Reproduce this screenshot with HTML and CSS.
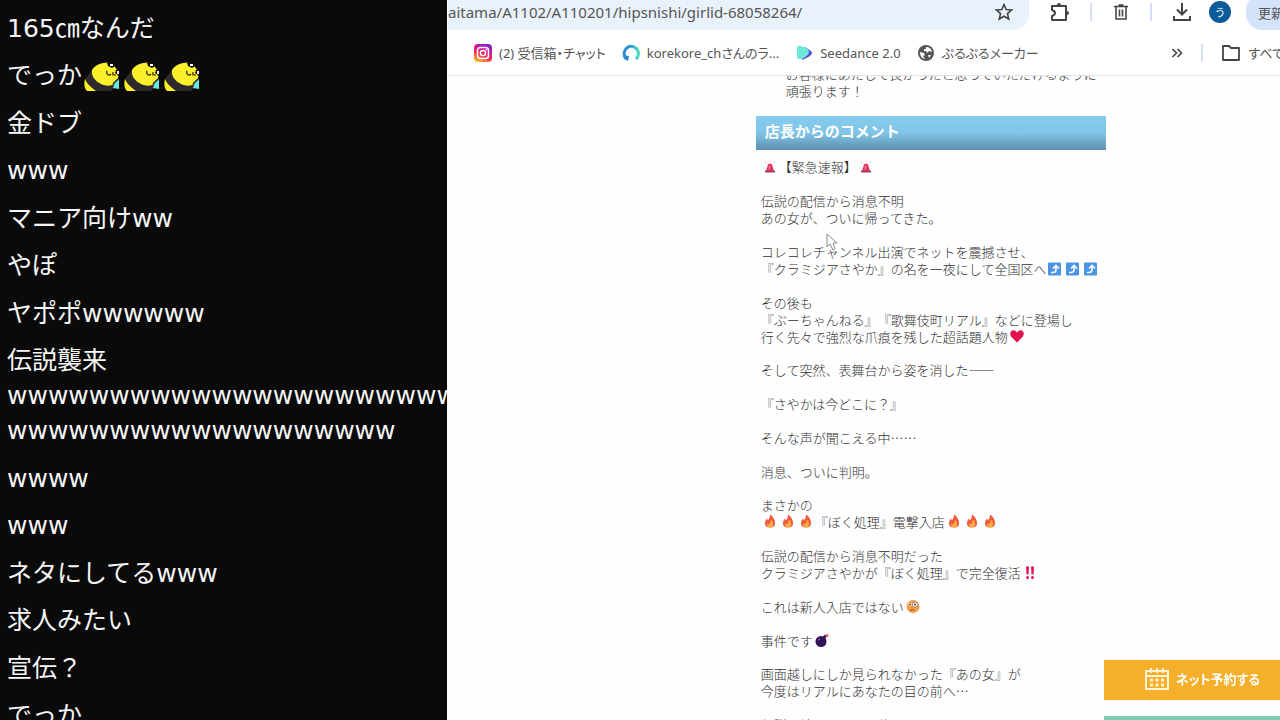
FILE: index.html
```
<!DOCTYPE html>
<html lang="ja">

<head>
    <meta charset="UTF-8">
    <meta name="viewport" content="width=device-width, initial-scale=1.0">
    <title>店長からのコメント</title>
    <link rel="stylesheet" href="styles.css">
</head>

<body>

    <!-- shared icons -->
    <svg class="sprite" aria-hidden="true">
        <symbol id="bee" viewBox="0 0 36 30">
            <path d="M10 29C2 29 0 24 1 17L8 8C12 2 18 0 25 1C32 3 35 8 35 16C34 24 30 28 26 29Z" fill="#2e2a2b"/>
            <path d="M8 8C11 3 18 0 25 1C33 4 36 12 33 19C30 24 23 25 17 22C11 19 7 14 8 8Z" fill="#fcf02c"/>
            <path d="M1 17C3 22 7 25 12 29H3C0 26 0 21 1 17Z" fill="#fcf02c"/>
            <path d="M23 1H29L31 4L28 6L24 4Z" fill="#111"/>
            <path d="M32 8H35V14L31 11Z" fill="#111"/>
            <path d="M26 2H29V4H26ZM33 9H35V12H33Z" fill="#fff"/>
            <path d="M23 9C22 13 25 14 27 12M29 10V13H32" fill="none" stroke="#222" stroke-width="1.2"/>
            <path d="M31 20L35 17V27L29 26Z" fill="#6fe6e6"/>
            <path d="M29 22L34 17" stroke="#222" stroke-width="1.5"/>
        </symbol>
        <symbol id="siren" viewBox="0 0 16 16">
            <path d="M4 13L6 6Q8 4 10 6L12 13Z" fill="#e0305c"/>
            <path d="M6 11L7 7H9L8 11Z" fill="#f06a8c"/>
            <path d="M3 12H13V14H3Z" fill="#b03a58"/>
            <path d="M5 5L3 3M8 3V2M11 5L13 3" stroke="#f3b08a" stroke-width="1"/>
        </symbol>
        <symbol id="arrow" viewBox="0 0 16 16">
            <rect x="1" y="2" width="13" height="13" rx="1" fill="#4c94e4"/>
            <path d="M4 12H6Q9 12 9 9V6M6 8L9 5L12 8" fill="none" stroke="#fff" stroke-width="1.6"/>
        </symbol>
        <symbol id="heart" viewBox="0 0 16 16">
            <path d="M8 14L2 8Q0 4 3 2Q6 1 8 4Q10 1 13 2Q16 4 14 8Z" fill="#e3124f"/>
        </symbol>
        <symbol id="fire" viewBox="0 0 16 16">
            <path d="M8 1Q13 4 13 10Q13 14 8 14Q3 14 3 10Q3 7 5 5L6 7Q8 5 8 1Z" fill="#f0593c"/>
            <path d="M9 6Q12 9 11 12Q10 14 8 14Q4 13 5 10L7 11Q9 9 9 6Z" fill="#fbae3c"/>
        </symbol>
        <symbol id="bangs" viewBox="0 0 16 16">
            <path d="M4 2H7L6.500 10H4.500ZM9 2H12L11.500 10H9.500Z" fill="#e3124f"/>
            <circle cx="5.500" cy="13" r="1.500" fill="#e3124f"/>
            <circle cx="10.500" cy="13" r="1.500" fill="#e3124f"/>
        </symbol>
        <symbol id="monocle" viewBox="0 0 16 16">
            <circle cx="8" cy="8" r="6.500" fill="#f59b43"/>
            <circle cx="5" cy="6" r="1.800" fill="#fff"/>
            <circle cx="10" cy="6" r="2.600" fill="#fff" stroke="#8d7a7a" stroke-width="0.800"/>
            <circle cx="5" cy="6" r="0.900" fill="#402a32"/>
            <circle cx="10" cy="6" r="0.900" fill="#402a32"/>
            <path d="M5 12Q8 10 9 12" fill="none" stroke="#7a4a32"/>
        </symbol>
        <symbol id="bomb" viewBox="0 0 16 16">
            <circle cx="7" cy="9" r="5.500" fill="#32145a"/>
            <path d="M10 5L12 3" stroke="#32145a" stroke-width="3"/>
            <circle cx="13" cy="3" r="1.500" fill="#ee5a5a"/>
            <circle cx="5" cy="7" r="1" fill="#7d5ab0"/>
        </symbol>
    </svg>

    <aside class="chat">
        <ul>
            <li>165㎝なんだ</li>
            <li>でっか<svg class="bee"><use href="#bee"/></svg><svg class="bee"><use href="#bee"/></svg><svg class="bee"><use href="#bee"/></svg></li>
            <li>金ドブ</li>
            <li>www</li>
            <li>マニア向けww</li>
            <li>やぽ</li>
            <li>ヤポポwwwwww</li>
            <li>伝説襲来<br>wwwwwwwwwwwwwwwwwwwwww<br>wwwwwwwwwwwwwwwwwww</li>
            <li>wwww</li>
            <li>www</li>
            <li>ネタにしてるwww</li>
            <li>求人みたい</li>
            <li>宣伝？</li>
            <li>でっか</li>
        </ul>
    </aside>

    <div class="browser">
        <header>
            <div class="toolbar">
                <div class="address">
                    <a class="url" href="#">aitama/A1102/A110201/hipsnishi/girlid-68058264/</a>
                    <button aria-label="ブックマーク">
                        <svg width="18" height="18" viewBox="0 0 18 18"><path d="M9 1.500L11.200 6.500L16.500 7L12.500 10.600L13.700 16L9 13.200L4.300 16L5.500 10.600L1.500 7L6.800 6.500Z" fill="none" stroke="#444" stroke-width="1.600"/></svg>
                    </button>
                </div>
                <div class="tools">
                    <button aria-label="拡張機能">
                        <svg width="20" height="20" viewBox="0 0 20 20">
                            <path d="M2 4H16V18H2V14Q5 13 5 11Q5 9 2 8Z" fill="none" stroke="#444" stroke-width="2" stroke-linejoin="round"/>
                            <path d="M7 3Q7 1 9 1Q11 1 11 3ZM17 9Q19 9 19 11Q19 13 17 13Z" fill="#444"/>
                        </svg>
                    </button>
                    <span class="divider"></span>
                    <button aria-label="削除">
                        <svg width="18" height="18" viewBox="0 0 18 18"><path d="M4 4V16H14V4M2 3.500H16M6.500 2H11.500M7.500 6.500V13.500M10.500 6.500V13.500" fill="none" stroke="#444" stroke-width="1.600"/></svg>
                    </button>
                    <span class="divider"></span>
                    <button aria-label="ダウンロード">
                        <svg width="20" height="20" viewBox="0 0 20 20"><path d="M10 1V12M5 7.500L10 12.500L15 7.500M2 14V18H18V14" fill="none" stroke="#444" stroke-width="2"/></svg>
                    </button>
                </div>
                <div class="profile">
                    <button class="avatar">う</button>
                    <button class="update">更新</button>
                </div>
            </div>

            <nav class="bookmarks">
                <a href="#">
                    <svg width="18" height="18" viewBox="0 0 18 18">
                        <defs><linearGradient id="insta" x1="0.200" y1="1" x2="0.700" y2="0"><stop offset="0" stop-color="#fdc02f"/><stop offset="0.400" stop-color="#f0304c"/><stop offset="0.700" stop-color="#d0179a"/><stop offset="1" stop-color="#7a1fd0"/></linearGradient></defs>
                        <rect width="18" height="18" rx="4" fill="url(#insta)"/>
                        <rect x="3.500" y="3.500" width="11" height="11" rx="3" fill="none" stroke="#fff" stroke-width="1.500"/>
                        <circle cx="9" cy="9" r="2.600" fill="none" stroke="#fff" stroke-width="1.500"/>
                        <circle cx="12.300" cy="5.800" r="0.800" fill="#fff"/>
                    </svg>
                    (2) 受信箱・チャット
                </a>
                <a href="#">
                    <svg width="18" height="18" viewBox="0 0 18 18">
                        <defs><linearGradient id="ring"><stop offset="0.300" stop-color="#2c8bd6"/><stop offset="1" stop-color="#48dcc0"/></linearGradient></defs>
                        <path d="M3 13A7.200 7.200 0 1 1 14 15" fill="none" stroke="url(#ring)" stroke-width="3"/>
                        <path d="M1 11L7 12L6 17L2 15Z" fill="#2c8bd6"/>
                    </svg>
                    korekore_chさんのラ...
                </a>
                <a href="#">
                    <svg width="18" height="18" viewBox="0 0 18 18">
                        <path d="M10 3Q17 7 17 9Q17 12 7 16Z" fill="#5546dc"/>
                        <path d="M2 4Q2 1 6 2Q14 4 14 8Q14 12 6 15Q3 16 2 13Z" fill="#6be8d6"/>
                    </svg>
                    Seedance 2.0
                </a>
                <a href="#">
                    <svg width="18" height="18" viewBox="0 0 18 18">
                        <circle cx="9" cy="9" r="8" fill="#555"/>
                        <path d="M3 8L7 9L8 11L6 12L8 15Q3 14 3 8ZM9 3Q14 3 15 8L12 7L10 9L9 7L7 7L7 5L9 5ZM11 11L14 11L12 14Z" fill="#fff"/>
                    </svg>
                    ぷるぷるメーカー
                </a>
                <div class="more">
                    <button aria-label="その他">
                        <svg width="12" height="10" viewBox="0 0 12 10"><path d="M1.500 1L5.500 5L1.500 9M6.500 1L10.500 5L6.500 9" fill="none" stroke="#444" stroke-width="1.600"/></svg>
                    </button>
                    <span class="divider"></span>
                    <a href="#">
                        <svg width="20" height="18" viewBox="0 0 20 18"><path d="M2 2H8L10 4H18V16H2Z" fill="none" stroke="#444" stroke-width="1.800" stroke-linejoin="round"/></svg>
                        すべて
                    </a>
                </div>
            </nav>
        </header>

        <main>
            <div class="column">
                <p class="message">お客様にあたしで良かったと思っていただけるように<br>頑張ります！</p>
                <h1>店長からのコメント</h1>
                <div class="comment">
                    <p><svg class="emoji"><use href="#siren"/></svg>【緊急速報】<svg class="emoji"><use href="#siren"/></svg></p>
                    <p>伝説の配信から消息不明<br>あの女が、ついに帰ってきた。</p>
                    <p>コレコレチャンネル出演でネットを震撼させ、<br>『クラミジアさやか』の名を一夜にして全国区へ<svg class="emoji"><use href="#arrow"/></svg><svg class="emoji"><use href="#arrow"/></svg><svg class="emoji"><use href="#arrow"/></svg></p>
                    <p>その後も<br>『ぶーちゃんねる』『歌舞伎町リアル』などに登場し<br>行く先々で強烈な爪痕を残した超話題人物<svg class="emoji"><use href="#heart"/></svg></p>
                    <p>そして突然、表舞台から姿を消した——</p>
                    <p>『さやかは今どこに？』</p>
                    <p>そんな声が聞こえる中……</p>
                    <p>消息、ついに判明。</p>
                    <p>まさかの<br><svg class="emoji"><use href="#fire"/></svg><svg class="emoji"><use href="#fire"/></svg><svg class="emoji"><use href="#fire"/></svg>『ぼく処理』電撃入店<svg class="emoji"><use href="#fire"/></svg><svg class="emoji"><use href="#fire"/></svg><svg class="emoji"><use href="#fire"/></svg></p>
                    <p>伝説の配信から消息不明だった<br>クラミジアさやかが『ぼく処理』で完全復活<svg class="emoji"><use href="#bangs"/></svg></p>
                    <p>これは新人入店ではない<svg class="emoji"><use href="#monocle"/></svg></p>
                    <p>事件です<svg class="emoji"><use href="#bomb"/></svg></p>
                    <p>画面越しにしか見られなかった『あの女』が<br>今度はリアルにあなたの目の前へ…</p>
                    <p>伝説の続きを、その体で</p>
                </div>
            </div>
        </main>
    </div>

    <div class="floating">
        <a class="reserve" href="#">
            <svg width="24" height="24" viewBox="0 0 24 24">
                <path d="M1 4H23V22H1ZM1 9H23M6 1V6M12 1V6M18 1V6" fill="none" stroke="#fff3d6" stroke-width="2"/>
                <path d="M5 13H8M10.500 13H13.500M16 13H19M5 18H8M10.500 18H13.500M16 18H19" stroke="#fff3d6" stroke-width="3"/>
            </svg>
            ネット予約する
        </a>
        <a class="phone" href="#" aria-label="電話する"></a>
    </div>

    <svg class="cursor" width="12" height="18" viewBox="0 0 12 18"><path d="M1 1V14L4 11L7 17L9 16L7 10H11Z" fill="#fff" stroke="#888"/></svg>

</body>

</html>
```

FILE: styles.css
```
* {
    box-sizing: border-box;
    margin: 0;
    padding: 0;
}

body {
    font-family: "Noto Sans", "Noto Sans CJK JP", sans-serif;
    background-color: #fefefe;
    color: #555;
    display: flex;
    height: 100vh;
    overflow: hidden;
}

a {
    color: inherit;
    text-decoration: none;
}

button {
    background: none;
    border: none;
    color: inherit;
    font: inherit;
    display: flex;
    align-items: center;
    justify-content: center;
}

.sprite {
    position: absolute;
    width: 0;
    height: 0;
}

/* chat */
.chat {
    width: 35%;
    flex: none;
    overflow: hidden;
    background-color: #0a0a0a;
    border-right: 1px solid #fff;
    color: #f6f6f6;
    padding: 11px 0 0 7px;
}

.chat ul {
    list-style: none;
    white-space: nowrap;
    font-family: "DejaVu Sans", "Noto Sans CJK JP", sans-serif;
    font-size: 25px;
    line-height: 35px;
}

.chat li {
    padding-bottom: 12px;
}

.chat li:nth-child(even) {
    padding-bottom: 13px;
}

.bee {
    width: 36px;
    height: 30px;
    margin: 0 2px;
    vertical-align: middle;
}

/* browser */
.browser {
    flex: 1;
    min-width: 0;
    display: flex;
    flex-direction: column;
}

header {
    background-color: #fff;
    border-bottom: 1px solid #e2e2e2;
    white-space: nowrap;
}

.toolbar {
    display: flex;
    height: 30px;
    overflow: hidden;
}

.address {
    flex: 1;
    min-width: 0;
    display: flex;
    align-items: center;
    justify-content: space-between;
    background-color: #e9f1fa;
    border-radius: 0 0 16px 0;
    padding: 0 16px 6px 0;
    font-size: 15px;
}

.tools,
.profile {
    display: flex;
    align-items: center;
    gap: 20px;
    padding-bottom: 6px;
}

.tools {
    padding-left: 21px;
}

.profile {
    gap: 15px;
    padding-left: 17px;
}

.divider {
    width: 2px;
    height: 18px;
    background-color: #d6def4;
}

.avatar {
    width: 22px;
    height: 22px;
    border-radius: 50%;
    background-color: #0b5c99;
    color: #fff;
    font-size: 11px;
}

.update {
    background-color: #d5e3fa;
    border-radius: 16px 0 0 16px;
    width: 34px;
    height: 36px;
    padding-left: 12px;
    font-size: 13px;
    justify-content: flex-start;
}

.bookmarks {
    display: flex;
    align-items: center;
    gap: 16px;
    height: 45px;
    padding-left: 26px;
    font-size: 13px;
    font-feature-settings: "palt";
    overflow: hidden;
}

.bookmarks a {
    display: flex;
    align-items: center;
    gap: 7px;
}

.more {
    display: flex;
    align-items: center;
    gap: 18px;
    margin-left: auto;
    margin-right: -4px;
}

/* shop page */
main {
    flex: 1;
    overflow: hidden;
    padding-left: 37%;
}

.column {
    width: 350px;
    font-family: "Noto Sans CJK JP", sans-serif;
    font-size: 13px;
    font-weight: 300;
    line-height: 17px;
    color: #333;
    white-space: nowrap;
    text-spacing-trim: space-all;
}

.message {
    padding-left: 30px;
    margin-top: -11px;
}

h1 {
    background: linear-gradient(#84ccf0, #80c4e6 50%, #5e8fae);
    color: #fff;
    font-size: 15px;
    font-weight: 700;
    line-height: 30px;
    height: 34px;
    margin: 17px 0 8px;
    padding-left: 9px;
}

.comment {
    padding-left: 5px;
}

.comment p {
    margin-bottom: 17px;
}

.comment p:nth-child(4n) {
    margin-bottom: 16px;
}

.emoji {
    width: 16px;
    height: 17px;
    margin: 0 1px;
    vertical-align: top;
}

/* floating buttons */
.floating {
    position: fixed;
    right: 0;
    bottom: -36px;
    width: 176px;
    display: flex;
    flex-direction: column;
    gap: 16px;
}

.reserve,
.phone {
    height: 40px;
    display: flex;
    align-items: center;
    justify-content: center;
    gap: 7px;
    padding: 0 0 3px 21px;
    background-color: #f5af2a;
    color: #fff;
    font-size: 13px;
    font-weight: 700;
    font-feature-settings: "palt";
    white-space: nowrap;
}

.phone {
    background-color: #7ccab0;
}

.cursor {
    position: absolute;
    left: 826px;
    top: 233px;
}
```
